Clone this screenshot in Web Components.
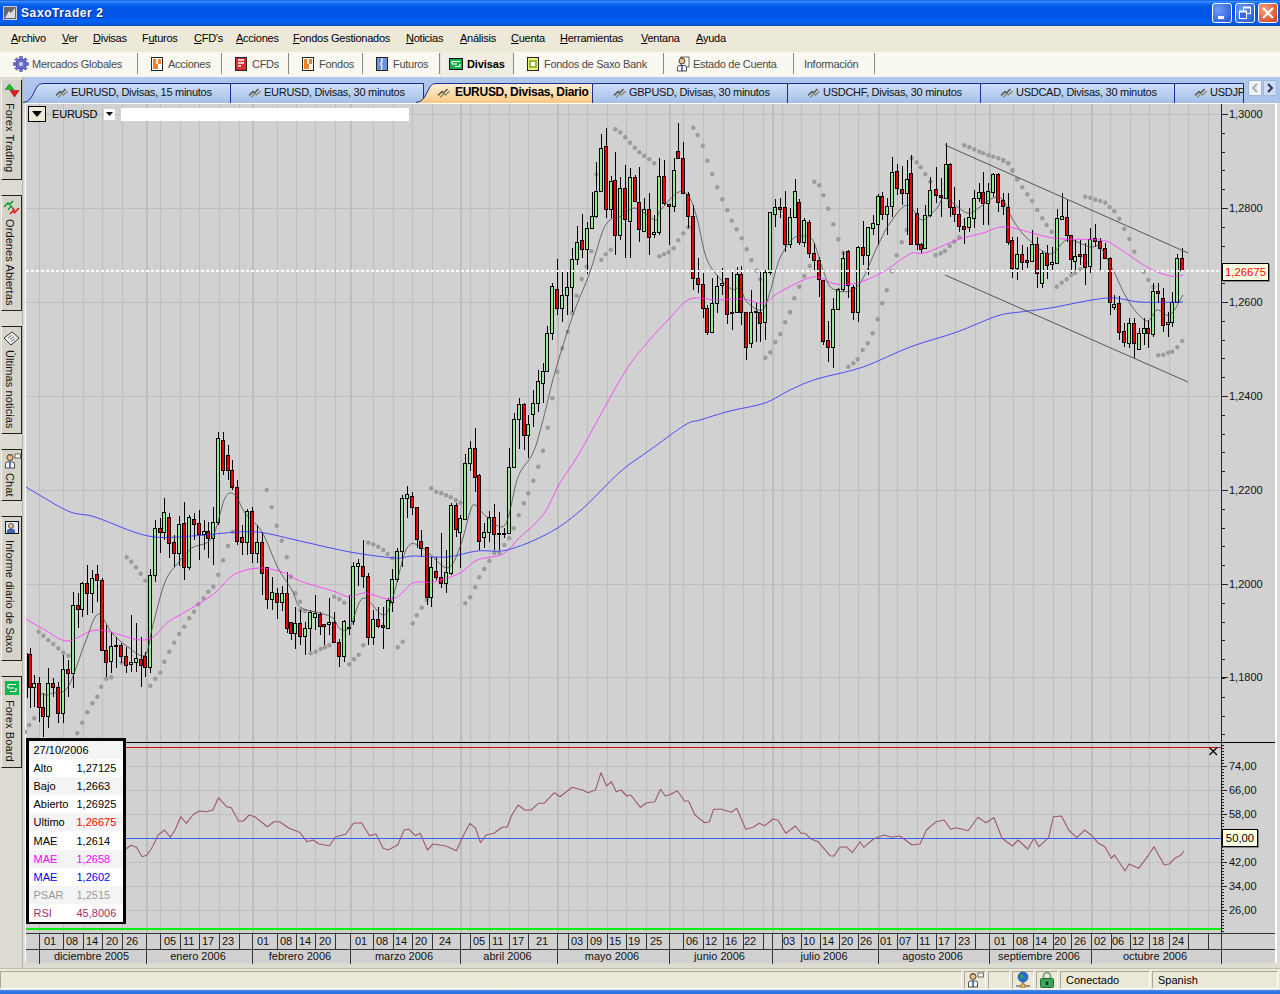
<!DOCTYPE html>
<html lang="es"><head><meta charset="utf-8"><title>SaxoTrader 2</title>
<style>
html,body{margin:0;padding:0;background:#ece9d8}
body{font:11px "Liberation Sans",Arial,sans-serif;width:1280px;height:994px;overflow:hidden}
</style></head><body>
<saxo-window>
  <saxo-titlebar>SaxoTrader 2</saxo-titlebar>
  <saxo-menubar></saxo-menubar>
  <saxo-toolbar></saxo-toolbar>
  <saxo-workspace>
    <saxo-sidebar></saxo-sidebar>
    <saxo-tabstrip></saxo-tabstrip>
    <saxo-chart></saxo-chart>
  </saxo-workspace>
  <saxo-statusbar></saxo-statusbar>
</saxo-window>
<script>
const FONT='"Liberation Sans",Arial,sans-serif';
function define(name,css,html,init){
  customElements.define(name,class extends HTMLElement{
    connectedCallback(){
      if(this.shadowRoot)return;
      const r=this.attachShadow({mode:'open'});
      r.innerHTML='<style>'+css+'</style>'+(typeof html==='function'?html(this):html);
      if(init)init(r,this);
    }
  });
}
const doc=(fill,inner)=>`<svg width="16" height="16" viewBox="0 0 16 16"><rect x="2.5" y="1.5" width="11" height="13" fill="${fill}" stroke="#222"/>${inner}</svg>`;
const person=`<svg width="18" height="16" viewBox="0 0 18 16"><circle cx="7" cy="4.5" r="3" fill="#e9bf8b" stroke="#222" stroke-width=".8"/><path d="M6 2.5h3l-.6-1.4H5z" fill="#7a5a20"/><path d="M2.5 15v-4q0-2 2-2h5q2 0 2 2v4z" fill="#fff" stroke="#222" stroke-width=".8"/><path d="M6.3 9h1.4v6H6.300z" fill="#1f3fb8"/><rect x="12" y="1" width="5.500" height="4" fill="#fff" stroke="#444" stroke-width=".8"/></svg>`;
const icons={
 gear:`<svg width="16" height="16" viewBox="0 0 16 16"><g fill="#6f74d8" stroke="#3b3f8f" stroke-width=".6"><circle cx="8" cy="8" r="5.200"/><g><rect x="6.700" y=".6" width="2.600" height="3"/><rect x="6.700" y="12.400" width="2.600" height="3"/><rect x=".6" y="6.700" width="3" height="2.600"/><rect x="12.400" y="6.700" width="3" height="2.600"/></g><g transform="rotate(45 8 8)"><rect x="6.700" y=".6" width="2.600" height="3"/><rect x="6.700" y="12.400" width="2.600" height="3"/><rect x=".6" y="6.700" width="3" height="2.600"/><rect x="12.400" y="6.700" width="3" height="2.600"/></g></g><circle cx="8" cy="8" r="2.600" fill="#c9ccf5" stroke="#3b3f8f" stroke-width=".6"/></svg>`,
 acc:doc('#fff','<path d="M4 3h3.500v5H9v5H4z" fill="#e8842a"/><path d="M9 3h3v5H9z" fill="#e8842a"/><path d="M7.500 3H9v5H7.500z" fill="#fff"/>'),
 cfd:doc('#d8302f','<path d="M5 4h6M5 7h6M5 10h3" stroke="#fff" stroke-width="1.300"/>'),
 fut:doc('#6d8fe0','<path d="M8 2v4l-1.500 2L8 10l-.6 4" stroke="#fff" stroke-width="1.200" fill="none"/>'),
 div:`<svg width="16" height="16" viewBox="0 0 16 16"><rect x="1.500" y="2.500" width="13" height="11" fill="#16b04a" stroke="#111"/><path d="M4 5.500h8M4 8h5M7 10.500h5M4 5.500V8M12 8v2.500" stroke="#fff" stroke-width="1.200" fill="none"/></svg>`,
 fsb:doc('#f4f17a','<rect x="5" y="5" width="6" height="6" fill="#fff" stroke="#7aa51e" stroke-width="1.500"/>'),
 person,
 acct:`<svg width="14" height="16" viewBox="0 0 14 16"><rect x="5" y="1" width="8" height="10" fill="#fff" stroke="#444" stroke-width=".8"/><circle cx="6" cy="5" r="3" fill="#e9bf8b" stroke="#222" stroke-width=".8"/><path d="M5 3h3l-.6-1.600H4z" fill="#7a5a20"/><path d="M1.500 15v-3.500q0-2 2-2h5q2 0 2 2V15z" fill="#fff" stroke="#222" stroke-width=".8"/><path d="M5.300 9.500h1.400V15H5.300z" fill="#1f3fb8"/></svg>`,
 fxt:`<svg width="16" height="16" viewBox="0 0 16 16"><path d="M1 6.500 5.500 1 10 6.500z" fill="#18c018" stroke="#064"  stroke-width=".5"/><path d="M6 7.500h9L10.500 14z" fill="#f01818" stroke="#600" stroke-width=".5"/></svg>`,
 ord:`<svg width="17" height="17" viewBox="0 0 17 17"><path d="M1 8 5 4l1.500 1.500L10 2" stroke="#0a9a2a" stroke-width="1.600" fill="none"/><path d="M5 11 8 7l1.500 2" stroke="#119933" stroke-width="1.400" fill="none"/><path d="M7 15l3-3 1.500 1.500L16 9" stroke="#d81818" stroke-width="1.600" fill="none"/><path d="M9.500 9l2 2.500" stroke="#d81818" stroke-width="1.400"/></svg>`,
 news:`<svg width="17" height="17" viewBox="0 0 17 17"><path d="M1 8 9 2l7 6-8 7z" fill="#eee" stroke="#222" stroke-width=".9"/><path d="M5 8l4-3M7 9.500l4-3M8 11.500l4-3" stroke="#777" stroke-width="1"/></svg>`,
 rep:`<svg width="16" height="16" viewBox="0 0 16 16"><rect x="1.500" y="1.500" width="13" height="12" fill="#dfe6f5" stroke="#111"/><circle cx="7" cy="6" r="2.500" fill="#e9bf8b" stroke="#222" stroke-width=".7"/><path d="M3 13v-2q0-2 2-2h4q2 0 2 2v2z" fill="#3a64a8"/></svg>`,
 board:`<svg width="16" height="16" viewBox="0 0 16 16"><rect x="1.500" y="1.500" width="13" height="13" fill="#18b24c" stroke="#0b5"/><path d="M4 4.500h8M4 8h6M6 11.500h6M4 4.500V8M12 8v3.500" stroke="#fff" stroke-width="1.200" fill="none"/></svg>`,
 zig:`<svg width="16" height="14" viewBox="0 0 16 14"><path d="M2 10.500 6 6.500l1.500 1.500 4-4" stroke="#55554a" stroke-width="1.500" fill="none"/><path d="M4 12.500l4-4 1.500 1.500 4-4" stroke="#8c8c70" stroke-width="1.500" fill="none"/></svg>`,
 net:`<svg width="18" height="18" viewBox="0 0 18 18"><circle cx="9" cy="6" r="5" fill="#1f6fd0" stroke="#123a80" stroke-width=".6"/><path d="M6 3l3 1 1 2-3 2zM10 8l2-2 1 1z" fill="#3aa845"/><path d="M9 11v3M2 15h14" stroke="#777" stroke-width="1.400"/><rect x="7" y="13" width="4" height="3.500" fill="#f0c040" stroke="#806010" stroke-width=".6"/></svg>`,
 lock:`<svg width="18" height="18" viewBox="0 0 18 18"><path d="M5.500 8V5a3.500 3.500 0 0 1 7 0v3" fill="none" stroke="#6d9a6d" stroke-width="1.600"/><rect x="2.500" y="7.500" width="13" height="9" rx="1" fill="#3fa35a" stroke="#1e6a35"/><rect x="7.800" y="10.500" width="2.400" height="3.500" fill="#0c3a1a"/></svg>`
};

define('saxo-window',`:host{display:flex;flex-direction:column;width:1280px;height:994px;background:#ece9d8;box-sizing:border-box}
.foot{height:4px;flex:none;background:linear-gradient(#3f86e8,#2a6fe0)}`,`<slot></slot><div class="foot"></div>`);

define('saxo-titlebar',`:host{display:flex;align-items:center;flex:none;height:26px;box-sizing:border-box;color:#fff;font:bold 12px ${FONT};letter-spacing:.6px;text-shadow:1px 1px #0a2a88;
background:linear-gradient(#0a58e4 0,#3a8efc 6%,#1670f8 12%,#0058e6 24%,#0054e3 50%,#0055eb 66%,#0262f4 82%,#0457d8 92%,#0a4fc8 100%)}
.ic{width:14px;height:14px;margin:0 4px 0 3px;background:#666;border:1px solid #ccd;display:flex;box-sizing:border-box}
.sp{flex:1}.b{width:20px;height:20px;margin-left:3px;border:1px solid #fff;border-radius:3px;box-sizing:border-box;background:radial-gradient(circle at 30% 30%,#6b9cf5,#2552d6);display:flex}
.c{background:radial-gradient(circle at 30% 30%,#f2a080,#d33c15);margin-right:2px;margin-left:3px}.b svg{margin:auto}`,
`<div class="ic"><svg width="12" height="12" viewBox="0 0 12 12"><path d="M1 11 5 4l2 2 4-5v10z" fill="#ddd"/></svg></div><slot></slot><div class="sp"></div>
<div class="b"><svg width="14" height="14"><rect x="3" y="10" width="6" height="3" fill="#fff"/></svg></div>
<div class="b"><svg width="14" height="14" fill="none" stroke="#fff"><rect x="5.500" y="1.500" width="7" height="6"/><rect x="1.500" y="5.500" width="7" height="7" fill="#3a68e0"/><path d="M5 1.500h8M1 5.500h8" stroke-width="2"/></svg></div>
<div class="b c"><svg width="14" height="14" stroke="#fff" stroke-width="2"><path d="M2 2l10 10M12 2 2 12"/></svg></div>`);

define('saxo-menubar',`:host{display:flex;flex:none;height:26px;align-items:center;background:#ece9d8;box-sizing:border-box;padding:0 0 2px 11px;color:#000;font-size:11px;letter-spacing:-.25px}
span{display:block;white-space:nowrap}u{text-underline-offset:1px}`,
()=>[['<u>A</u>rchivo',51],['<u>V</u>er',31],['<u>D</u>ivisas',49],['F<u>u</u>turos',52],['<u>C</u>FD’s',42],['<u>A</u>cciones',57],['<u>F</u>ondos Gestionados',113],['<u>N</u>oticias',54],['<u>A</u>nálisis',51],['<u>C</u>uenta',49],['<u>H</u>erramientas',81],['<u>V</u>entana',55],['<u>A</u>yuda',40]].map(([t,w])=>`<span style="width:${w}px">${t}</span>`).join(''));

define('saxo-tool',`:host{display:flex;align-items:center;flex:none;height:25px;box-sizing:border-box;padding-bottom:2px;color:#4a4a4a;white-space:nowrap;position:relative;gap:3px;letter-spacing:-.28px}
:host::after{content:"";position:absolute;right:0;top:1px;bottom:3px;width:1px;background:#8c8a80}
:host([active]){background:#f0eee2;color:#000;font-weight:bold;border-left:1px solid #e4e2d8;letter-spacing:-.1px}
svg{display:block}`,t=>`${t.dataset.icon?icons[t.dataset.icon]:''}<slot></slot>`);

define('saxo-toolbar',`:host{display:flex;flex:none;height:25px;background:#f9f8f1;border-bottom:1px solid #a8a89e;box-sizing:content-box;margin-bottom:-1px}`,
`<slot></slot>`,(r,h)=>{
 [['gear','Mercados Globales',138,13],['acc','Acciones',84,11],['cfd','CFDs',67,11],['acc','Fondos',74,11],['fut','Futuros',77,11],['div','Divisas',74,7,1],['fsb','Fondos de Saxo Bank',150,11],['acct','Estado de Cuenta',130,12],['','Información',81,10]]
 .forEach(([ic,t,w,p,a])=>{const e=document.createElement('saxo-tool');if(ic)e.dataset.icon=ic;if(a)e.setAttribute('active','');e.style.width=w+'px';e.style.paddingLeft=p+'px';e.textContent=t;h.appendChild(e);});
});

define('saxo-workspace',`:host{display:grid;flex:none;height:891px;grid-template-columns:23px 1fr;grid-template-rows:26px 1fr;background:#dedbd3}
::slotted(saxo-sidebar){grid-row:1 / 3}`,`<slot></slot>`);

define('saxo-sidetab',`:host{display:block;flex:none;box-sizing:border-box;width:21px;margin-left:1px;background:#d6d3cb;border:1px solid #222;border-left:1px solid #f4f3ee;color:#111}
.i{display:flex;justify-content:center;height:23px;padding-top:3px;box-sizing:border-box}
.t{writing-mode:vertical-rl;white-space:nowrap;font-size:11px;line-height:16px;letter-spacing:.1px}`,
t=>`<div class="i">${icons[t.dataset.icon]}</div><div class="t"><slot></slot></div>`);

define('saxo-sidebar',`:host{display:flex;flex-direction:column;gap:15px;padding-top:3px;box-sizing:border-box;border-right:1px solid #b3b1a8;background:#dedbd3;overflow:hidden}`,`<slot></slot>`,(r,h)=>{
 [['fxt','Forex Trading',100],['ord','Ordenes Abiertas',116],['news','Últimas noticias',108],['person','Chat',52],['rep','Informe diario de Saxo',145],['board','Forex Board',92]]
 .forEach(([ic,t,H],i)=>{const e=document.createElement('saxo-sidetab');e.dataset.icon=ic;e.style.height=H+'px';e.textContent=t;if(i==0)e.style.borderTop='0';h.appendChild(e);});
});

define('saxo-tab',`:host{display:flex;align-items:center;flex:none;height:20px;position:relative;box-sizing:border-box;padding-bottom:2px;white-space:nowrap;color:#111;gap:1px;font-size:11px;letter-spacing:-.27px}
:host([active]){font-weight:bold;font-size:12px;color:#000;letter-spacing:-.28px;gap:3px}
svg.bg{position:absolute;left:0;top:0;z-index:-1}svg.ic{flex:none}`,
t=>{const w=parseInt(t.style.width),a=t.hasAttribute('active');const id='g';
 return `<svg class="bg" width="${w}" height="20"><defs><linearGradient id="${id}" x1="0" y1="0" x2="0" y2="1">${a?'<stop offset="0" stop-color="#fff0d8"/><stop offset="1" stop-color="#fbc884"/>':'<stop offset="0" stop-color="#cfe0f8"/><stop offset="1" stop-color="#a3bfe9"/>'}</linearGradient></defs><path d="M0 19.500 4 18.500Q8 16.500 11 9.500L14 3.500Q16 .5 20 .5H${w-.5}V20H0z" fill="url(#${id})"/><path d="M0 19.500 4 18.500Q8 16.500 11 9.500L14 3.500Q16 .5 20 .5H${w-.5}V20" fill="none" stroke="#1a2c90"/></svg><span style="display:block">${icons.zig.replace('<svg','<svg class="ic" style="display:block"')}</span><slot></slot>`;});

define('saxo-tabstrip',`:host{display:flex;background:linear-gradient(#b1c8ed,#a9c2ea);padding-top:6px;box-sizing:border-box;height:26px;overflow:hidden;position:relative}
.clip{display:flex;width:1221px;flex:none;overflow:hidden;isolation:isolate}
.btns{display:flex;gap:1px;margin:-3px 0 0 4px;height:17px}
.btns div{width:14px;height:16px;background:#f0f3fa;border:1px solid #9fb6dd;box-sizing:border-box;display:flex}
.btns svg{margin:auto}`,
`<div class="clip"><slot></slot></div><div class="btns"><div><svg width="8" height="10" fill="none" stroke="#aaa" stroke-width="2"><path d="M6 1 2 5l4 4"/></svg></div><div style="background:#cddcf3"><svg width="8" height="10" fill="none" stroke="#335" stroke-width="2"><path d="M2 1l4 4-4 4"/></svg></div></div>`,(r,h)=>{
 [['EURUSD, Divisas, 15 minutos',208,0,31],['EURUSD, Divisas, 30 minutos',211,-18,34],['EURUSD, Divisas, Diario',177,-8,20,1],['GBPUSD, Divisas, 30 minutos',213,-18,37],['USDCHF, Divisas, 30 minutos',211,-18,36],['USDCAD, Divisas, 30 minutos',212,-18,36],['USDJPY',87,-18,36]]
 .forEach(([t,w,m,p,a],i)=>{const e=document.createElement('saxo-tab');e.style.cssText=`width:${w}px;margin-left:${m}px;padding-left:${p}px;z-index:${a?20:10-i}`;if(a)e.setAttribute('active','');e.textContent=t;h.appendChild(e);});
});

/* chart data, transcribed in crop coordinates: [ox, oy] maps crop x/3+ox, y/3+oy */
const C=[
[25,480,`14 505 685 522 622 r;28 585 680 610 622 g;41 590 725 610 682 r;55 640 770 682 708 r;70 565 745 610 707 g;85 595 650 610 622 r;100 605 730 622 700 r;115 525 730 568 700 g;130 540 650 568 580 r;143 335 625 376 580 g;158 340 445 376 388 r;172 305 410 310 388 g;187 255 405 310 340 r;202 270 400 295 340 g;217 255 365 283 300 r;230 295 512 300 510 r;244 435 590 510 545 r;259 455 578 498 542 g;274 470 565 496 498 r;289 490 550 496 528 r;304 500 580 528 556 r;319 405 575 547 553 g;332 430 575 535 547 g;347 470 622 538 556 r;361 515 592 527 562 r;376 268 578 286 562 g;391 120 305 145 286 g;406 115 220 145 157 r;418 55 180 97 157 g;433 100 235 112 190 r;448 165 260 187 220 r;463 108 258 133 220 g;478 65 300 130 262 r;493 105 270 112 262 g;508 100 180 118 133 r;521 90 240 130 163 r;536 120 210 153 163 g;550 125 235 153 175 r;565 80 255 127 175 g;580 -144 135 -126 125 g;594 -144 -15 -120 -30 r;609 -105 0 -75 -30 r;622 -60 30 -30 22 r;637 0 195 22 182 r;652 135 225 172 185 r;667 88 225 92 185 g;682 80 248 92 220 r;697 135 250 185 220 g;710 155 345 185 278 r;725 260 388 262 358 r;740 290 390 337 358 g;755 325 418 340 365 r;770 318 392 340 365 g;785 275 460 340 445 r;797 425 480 427 458 r;811 380 508 430 458 g`],
[300,380,`1 690 795 730 768 r;15 725 825 745 768 g;30 690 812 697 745 g;45 645 750 700 710 g;60 695 765 702 738 r;73 735 795 733 738 r;88 655 765 727 733 g;103 695 790 727 785 r;118 778 860 785 827 r;132 720 845 722 827 g;148 645 765 740 742 k;160 545 735 557 722 g;175 538 618 550 557 g;190 480 625 557 587 r;205 580 795 587 770 r;220 690 795 718 770 g;235 680 745 718 738 r;250 680 808 735 740 r;263 655 745 660 743 g;277 568 695 596 665 g;292 505 605 514 596 g;307 345 560 355 514 g;322 318 415 343 355 g;337 335 405 347 382 r;350 380 505 382 478 r;364 450 530 482 505 r;380 500 675 502 652 r;394 530 680 562 652 g;409 530 600 572 590 r;424 460 625 590 610 r;438 510 640 577 610 g;452 370 585 376 578 g;467 370 470 376 448 r;481 405 565 415 455 g;496 222 420 250 418 g;511 182 272 205 250 g;526 145 335 205 290 r;538 282 510 286 482 r;553 430 505 455 472 g;568 392 485 410 455 g;583 372 510 410 463 r;598 395 510 458 463 g;613 445 475 460 461 k;628 205 460 260 458 g;641 100 265 118 260 g;656 55 208 73 118 g;671 70 210 73 165 r;685 105 235 133 165 g;700 30 140 68 103 g;715 -30 95 3 68 g;729 -50 70 -27 8 g`],
[530,115,`52 632 770 655 768 g;67 505 675 514 655 g;82 432 600 522 580 r;97 470 620 541 580 g;112 470 600 517 541 g;127 400 590 433 517 g;140 332 450 382 433 g;155 297 430 376 403 r;170 322 478 340 403 g;185 230 340 304 340 g;199 140 310 228 304 g;214 57 230 100 228 g;227 38 310 92 283 r;242 183 310 197 283 g;256 112 420 196 360 r;271 185 375 220 360 g;286 150 430 220 313 r;301 160 430 187 318 g;314 180 260 187 258 r;328 155 380 260 343 r;343 250 350 283 347 g;358 235 420 283 366 r;373 300 368 352 358 g;388 130 360 184 352 g;402 135 270 184 265 r;416 268 390 268 274 r;431 130 290 166 274 g;445 25 130 109 130 r;460 80 235 128 235 r;475 232 340 236 302 r;490 270 525 302 490 r;503 430 535 490 508 r;518 475 610 508 580 r;532 570 660 580 652 r;547 490 655 565 652 g;562 480 595 512 565 g;577 460 540 503 511 g;592 488 628 490 596 r;605 470 645 592 593 k;620 455 595 478 592 g;634 452 630 478 592 r;649 590 735 592 695 r;664 525 700 590 685 g;679 565 680 588 592 r;691 470 680 592 625 r;706 465 675 470 622 g;721 290 480 292 470 g;736 252 335 277 298 g;751 250 310 277 283 r;766 228 410 277 388 r;780 280 400 307 388 g`],
[790,130,`14 148 265 184 262 g;28 208 345 217 335 r;43 265 350 270 335 g;58 270 385 275 370 r;73 340 420 370 390 r;88 380 500 390 448 r;100 450 645 450 632 r;115 573 695 631 652 r;130 505 715 538 652 g;145 475 540 478 537 g;160 365 485 384 478 g;175 360 505 362 465 r;190 465 570 470 547 r;203 348 575 350 547 g;218 273 405 350 376 r;233 290 435 292 376 g;248 255 315 280 295 g;263 193 345 199 283 g;277 185 270 199 253 r;290 205 315 229 253 g;305 82 260 127 229 g;320 103 195 124 175 r;335 107 225 176 190 r;350 90 315 148 190 g;364 75 345 129 343 r;380 235 360 248 343 r;392 340 370 343 358 r;406 225 358 256 355 g;421 140 262 180 255 g;437 110 220 178 196 r;452 145 262 196 202 r;467 40 205 103 203 g;479 100 260 103 232 r;493 172 275 232 253 r;508 210 305 253 287 r;523 265 342 287 298 r;538 235 305 262 292 g;553 180 295 203 265 g;568 160 215 187 203 g;580 125 285 187 218 r;595 160 285 183 218 g;610 128 200 133 186 g;625 130 245 133 215 r;640 190 255 211 228 r;655 190 345 230 335 r`],
[1000,130,`37 320 445 331 415 r;52 320 450 373 413 g;67 345 420 373 395 r;82 350 415 391 395 r;97 300 395 343 392 g;112 322 475 343 428 r;127 362 475 370 460 g;140 345 447 370 405 r;155 350 420 397 403 g;170 238 400 265 398 g;185 190 270 259 267 g;200 207 335 262 315 r;214 315 430 315 388 r;226 330 420 377 392 g;241 330 405 373 378 r;256 340 465 373 412 r;271 295 430 326 408 g;286 283 350 323 332 r;301 325 420 332 355 r;316 340 385 355 385 r;329 380 555 385 516 r;343 495 540 523 530 g;358 497 630 519 605 r;373 578 650 604 637 r;388 565 655 580 640 g;403 565 685 580 640 r;416 595 660 610 658 g;431 565 645 595 610 g;445 570 655 595 610 r;460 460 620 482 613 g;475 460 520 482 490 r;490 475 605 503 586 r;505 545 622 577 583 g;517 485 590 515 577 g;532 372 515 385 515 g;547 355 425 385 420 r`]
];
const D=[
[25,480,`0 755;13 735;28 715;41 455;55 467;70 481;85 492;100 505;115 518;130 527;157 760;172 728;187 697;202 670;217 650;229 620;244 596;259 592;290 548;305 232;319 245;333 262;347 281;361 302;376 617;391 596;406 578;418 545;433 515;448 488;463 462;478 440;493 415;507 395;520 373;536 355;550 335;565 320;580 284;594 241;609 198;623 155;725 30;740 82;755 137;770 182;785 232;797 290;811 340;826 390`],
[300,380,`0 665;15 693;32 820;47 815;62 807;75 802;88 796;103 650;118 658;133 668;148 853;162 838;176 824;190 796;205 488;220 493;235 500;250 510;263 522;277 535;293 802;308 785;338 730;350 706;365 683;380 660;394 325;409 335;424 340;438 346;452 352;467 360;481 368;496 670;511 652;526 622;538 592;553 567;568 542;583 518;598 518;613 495;628 475;641 445;656 406;671 370;685 340;700 302;715 260;729 212;743 143;757 55`],
[530,115,`82 770;97 700;113 650;127 595;140 542;155 492;170 455;184 409;199 178;214 435;227 418;242 404;256 43;271 52;286 67;300 83;314 98;328 112;343 122;358 133;373 145;388 424;402 418;416 412;431 400;445 376;460 355;475 337;490 38;503 60;518 92;532 137;547 178;562 217;577 253;592 286;605 317;620 343;635 370;650 403;664 436;680 467;691 493;706 728;721 712;736 682;751 657;766 622;780 592`],
[790,130,`0 547;13 505;28 470;43 438;59 408;73 155;88 166;100 196;115 236;130 283;145 328;160 368;175 710;190 700;203 688;218 660;233 640;248 610;263 568;277 520;290 481;305 424;320 376;335 337;350 300;365 85;380 97;392 112;406 133;421 155;437 376;452 370;465 363;479 348;493 335;508 322;523 46;538 52;553 58;568 65;580 70;595 76;610 80;625 85;640 90;655 100;668 120;682 148`],
[1000,130,`10 92;25 100;37 122;52 148;67 172;82 193;97 213;112 240;127 265;140 285;155 305;170 470;185 458;200 448;214 435;226 428;241 418;256 200;271 203;286 209;301 213;316 218;329 231;343 244;358 266;373 297;388 327;403 365;431 425;445 450;460 472;475 676;490 674;505 668;517 665;532 652;547 633`]
];
const BLUE='26,487 68,511 95,517 148,536 192,536 225,533 258,532 300,541 350,552 395,558 413,556 447,557 477,551 507,550 547,534 580,511 620,472 650,450 685,425 700,420 730,411 765,403 790,390 817,379 863,367 910,347 957,332 997,316 1020,312 1050,308 1107,298 1140,302 1183,302';
const MAG='26,619 45,630 68,641 98,630 145,640 168,622 185,612 215,593 233,575 258,568 282,572 300,581 333,591 350,597 365,593 393,599 413,583 433,582 460,573 477,560 503,554 520,537 543,515 560,483 580,452 623,375 647,343 670,318 690,299 717,300 743,299 763,303 780,292 813,277 835,284 857,283 883,272 910,254 925,253 957,240 983,233 1007,227 1053,238 1100,240 1117,247 1147,267 1170,276 1183,275';
const GRY='37,690 45,695 53,693 68,687 85,643 98,614 112,633 128,647 145,655 153,625 165,582 178,563 192,548 212,538 225,498 235,495 245,513 262,532 278,568 292,590 300,607 320,613 333,618 340,629 350,627 363,598 383,615 393,597 407,548 423,548 447,568 460,547 470,512 475,505 487,517 505,525 518,477 533,453 543,420 555,372 573,315 590,272 602,233 610,220 620,217 635,208 655,220 660,211 677,193 688,195 697,218 708,262 730,288 740,288 747,302 762,310 770,292 780,258 795,237 810,238 815,245 823,270 833,289 857,287 878,245 890,223 907,205 922,220 937,208 945,198 967,213 980,207 993,198 1003,200 1013,220 1027,238 1050,254 1067,240 1090,247 1100,247 1113,270 1125,295 1137,313 1148,321 1157,310 1170,315 1183,295';
const RSI='130,330 138,316 145,322 152,350 158,345 165,320 172,285 180,270 187,292 193,270 200,230 207,250 215,225 223,213 232,215 240,210 247,173 257,200 263,203 272,243 278,243 285,225 292,230 300,245 308,260 316,245 323,245 335,265 348,277 357,305 365,300 372,312 385,317 393,290 405,283 415,250 425,248 435,287 443,282 452,325 458,330 470,315 478,270 484,268 492,287 498,280 507,330 514,312 530,318 543,332 552,285 560,250 567,265 573,308 580,285 590,280 600,262 606,262 612,225 620,195 628,210 636,210 645,190 652,190 665,158 672,170 687,142 700,150 707,158 716,150 723,98 730,138 736,125 742,155 748,150 755,168 760,165 772,202 780,188 790,185 797,148 803,168 810,163 818,152 827,183 832,183 840,225 852,248 858,245 863,208 873,208 885,217 892,205 903,268 912,262 920,250 927,257 937,237 943,240 953,280 965,258 972,280 977,280 985,298 993,305 1008,347 1013,348 1020,322 1028,320 1036,338 1045,305 1050,322 1062,297 1075,285 1085,292 1095,288 1110,315 1120,312 1128,270 1140,245 1150,240 1158,268 1165,263 1180,272 1192,232 1202,248 1212,233 1222,295 1235,318 1242,300 1254,327 1262,295 1268,320 1280,293 1286,230 1296,228 1305,270 1315,293 1325,270 1335,290 1342,310 1350,320 1358,355 1362,345 1375,393 1380,372 1392,385 1403,350 1411,320 1424,375 1430,372 1437,355 1445,345 1448,333'
 .split(' ').map(p=>{const [a,b]=p.split(',');return (20+a*.8036).toFixed(1)+','+(740+b/3).toFixed(1)}).join(' ');
const VGRID=[39,63,83,102,122,160,180,199,219,239,277,296,315,335,373,393,412,432,470,489,509,528,568,587,607,626,646,683,703,723,743,763,782,801,820,839,858,897,917,936,955,975,1013,1033,1053,1071,1110,1130,1149,1169,1188,1208];
const VTHICK=[146,252,350,460,557,669,772,878,989,1091];
function smooth(str){
 const p=str.split(' ').map(s=>s.split(',').map(Number));
 let d=`M${p[0][0]} ${p[0][1]}`;
 for(let i=0;i<p.length-1;i++){
  const a=p[Math.max(0,i-1)],b=p[i],c=p[i+1],e=p[Math.min(p.length-1,i+2)];
  const k=6;
  d+=`C${(b[0]+(c[0]-a[0])/k).toFixed(1)} ${(b[1]+(c[1]-a[1])/k).toFixed(1)} ${(c[0]-(e[0]-b[0])/k).toFixed(1)} ${(c[1]-(e[1]-b[1])/k).toFixed(1)} ${c[0]} ${c[1]}`;
 }
 return d;
}
function chartSvg(){
 let s='';
 const ln=(x1,y1,x2,y2,c,w=1,extra='')=>`<line x1="${x1}" y1="${y1}" x2="${x2}" y2="${y2}" stroke="${c}" stroke-width="${w}" ${extra}/>`;
 let g='';
 VGRID.forEach(x=>g+=ln(x+.5,104,x+.5,933,'#bfbfbf'));
 VTHICK.forEach(x=>g+=ln(x+.5,104,x+.5,933,'#bdbdbd',2));
 [114,208,302,396,490,584,677].forEach(y=>g+=ln(26,y+.5,1221,y+.5,'#bfbfbf',1.500));
 [766,790,814,862,886,910].forEach(y=>g+=ln(26,y+.5,1221,y+.5,'#bfbfbf',1.500));
 s+=`<g shape-rendering="crispEdges">${g}</g>`;
 D.forEach(([ox,oy,d])=>d.split(';').forEach(p=>{const [a,b]=p.split(' ').map(Number);s+=`<circle cx="${(ox+a/3).toFixed(1)}" cy="${(oy+b/3).toFixed(1)}" r="2.200" fill="#9b9b9b"/>`;}));
 let w='',b='';
 w+=ln(27.500,653,27.500,698,'#000');
 C.forEach(([ox,oy,d])=>d.split(';').forEach(p=>{const f=p.split(' ');const x=Math.round(ox+f[0]/3);const Y=i=>Math.round(oy+f[i]/3);
   w+=ln(x+.5,Y(1),x+.5,Y(2),'#000');
   const t=Y(3),bb=Math.max(Y(4),t+1);const col={g:'#8fee8f',r:'#f00000',k:'#000'}[f[5]];
   b+=`<rect x="${x-1.5}" y="${t+.5}" width="3" height="${bb-t}" fill="${col}" stroke="#000"/>`;
 }));
 s+=`<g shape-rendering="crispEdges">${w}${b}</g>`;
 const sp=(p,c,o=1,wd=1)=>`<path d="${smooth(p)}" fill="none" stroke="${c}" stroke-width="${wd}" opacity="${o}"/>`;
 const pl=(p,c,o=1,wd=1)=>`<polyline points="${p}" fill="none" stroke="${c}" stroke-width="${wd}" opacity="${o}" stroke-linejoin="round"/>`;
 s+=sp(GRY,'#444',.75)+sp(MAG,'#ff30ff',.8)+sp(BLUE,'#2a2aff',.8);
 s+=ln(945,145,1188,253,'#555')+ln(945,275,1188,382,'#555');
 s+=ln(26,271,1221,271,'#fff',2,'stroke-dasharray="3 2"');
 s+=ln(26,742.5,1275,742.5,'#000',1,'shape-rendering="crispEdges"');
 s+=ln(26,747.5,1221,747.5,'#cc1010',1,'shape-rendering="crispEdges"');
 s+=ln(26,838.5,1221,838.5,'#2f62ff',1,'shape-rendering="crispEdges"');
 s+=pl(RSI,'#9c5876',1,1.1);
 s+=ln(26,929,1221,929,'#10f010',2,'shape-rendering="crispEdges"');
 let ax=ln(1221.5,104,1221.5,933,'#222');
 for(let y=114;y<740;y+=18.8){ax+=ln(1222,Math.round(y)+.5,1225,Math.round(y)+.5,'#222');}
 [114,208,302,396,490,584,677].forEach(y=>ax+=ln(1222,y+.5,1228,y+.5,'#222'));
 for(let y=745;y<932;y+=3){ax+=ln(1222,y+.5,1224,y+.5,'#222');}
 [766,790,814,838,862,886,910].forEach(y=>ax+=ln(1222,y+.5,1227,y+.5,'#222'));
 s+=`<g shape-rendering="crispEdges">${ax}</g>`;
 const tx=(y,t)=>`<text x="1229" y="${y+4}" font-size="11" fill="#111" font-family='"Liberation Sans",Arial,sans-serif'>${t}</text>`;
 [[114,'1,3000'],[208,'1,2800'],[302,'1,2600'],[396,'1,2400'],[490,'1,2200'],[584,'1,2000'],[677,'1,1800'],[766,'74,00'],[790,'66,00'],[814,'58,00'],[862,'42,00'],[886,'34,00'],[910,'26,00']].forEach(([y,t])=>s+=tx(y,t));
 s+=`<path d="M1209.500 747.500 1217 755M1217 747.500 1209.500 755" stroke="#000" stroke-width="1.200"/>`;
 return s;
}

define('saxo-legend',`:host{position:absolute;left:1px;top:635px;width:100px;height:186px;box-sizing:border-box;border:3px solid #000;border-bottom-width:2px;background:#fff;display:grid;grid-template-rows:repeat(10,18.1px);font-size:11px;color:#000;z-index:3}
div{display:flex;align-items:center;padding-left:4.500px;white-space:nowrap}
div:nth-child(even){background:#f4f4f4}
b{font-weight:normal;width:43px;flex:none}`,
()=>{const rows=[['Alto','1,27125'],['Bajo','1,2663'],['Abierto','1,26925'],['Ultimo','1,26675','#f00',1],['MAE','1,2614'],['MAE','1,2658','#f0f'],['MAE','1,2602','#00f'],['PSAR','1,2515','#999'],['RSI','45,8006','#a03068']];
 return '<div>27/10/2006</div>'+rows.map(([a,b,c,only])=>`<div style="${c&&!only?'color:'+c:''}"><b>${a}</b><span style="${c?'color:'+c:''}">${b}</span></div>`).join('');});

define('saxo-dateaxis',`:host{display:block;height:30px;box-sizing:border-box;border-top:1px solid #333;margin-left:1px;margin-right:2px;font-size:11px;color:#111;background:#d1d1d1}
.r{display:flex;height:15px;box-sizing:border-box}.r+.r{border-top:1px solid #333;height:15px}
.c{box-sizing:border-box;border-left:1px solid #333;white-space:nowrap;line-height:14px;flex:none}
.m{text-align:center;line-height:13px;padding-right:3px}`,
()=>{
 const days=[[26],[39,'01',50],[63,'08',72],[83,'14',92],[102,'20',112],[122,'26',132],[146],[160,'05',170],[180,'11',189],[199,'17',208],[219,'23',228],[239],[252,'01',263],[277,'08',286],[296,'14',305],[315,'20',325],[335],[350,'01',361],[373,'08',382],[393,'14',401],[412,'20',421],[432,'24',445],[460],[470,'05',479],[489,'11',498],[509,'17',518],[528,'21',542],[557],[568,'03',577],[587,'09',596],[607,'15',615],[626,'19',634],[646,'25',656],[669],[683,'06',692],[703,'12',711],[723,'16',731],[743,'22',750],[763],[772],[782,'03',788],[801,'10',809],[820,'14',828],[839,'20',847],[858,'26',866],[878,'01',886],[897,'07',905],[917,'11',925],[936,'17',944],[955,'23',964],[975],[989,'01',1000],[1013,'08',1022],[1033,'14',1041],[1053,'20',1060],[1071,'26',1080],[1091,'02',1100],[1111,'06',1118],[1130,'12',1138],[1149,'18',1158],[1169,'24',1178],[1188],[1208],[1221]];
 let a='';
 days.forEach((d,i)=>{const nx=i<days.length-1?days[i+1][0]:1275;const pad=d[1]?Math.max(0,d[2]-6-d[0]-1):0;
  a+=`<div class="c" style="width:${nx-d[0]}px;padding-left:${pad}px;${i==0?'border-left:0':''}">${d[1]||''}</div>`;});
 const mons=[[26,''],[39,'diciembre 2005'],[146,'enero 2006'],[252,'febrero 2006'],[350,'marzo 2006'],[460,'abril 2006'],[557,'mayo 2006'],[669,'junio 2006'],[772,'julio 2006'],[878,'agosto 2006'],[989,'septiembre 2006'],[1091,'octubre 2006'],[1221,'']];
 let b='';
 mons.forEach((m,i)=>{const nx=i<mons.length-1?mons[i+1][0]:1275;b+=`<div class="c m" style="width:${nx-m[0]}px;${i==0?'border-left:0':''}">${m[1]}</div>`;});
 return `<div class="r">${a}</div><div class="r">${b}</div>`;});

define('saxo-pricetag',`:host{position:absolute;box-sizing:border-box;height:18px;background:#ffffe1;border:1px solid #000;font-size:11.300px;line-height:16px;text-align:center;z-index:2;box-shadow:1px 1px 0 #888}`,`<slot></slot>`);

define('saxo-symbolbar',`:host{position:absolute;left:3px;top:3px;display:flex;align-items:center;height:16px;z-index:2;color:#000;font-size:11px;letter-spacing:-.2px}
.b{width:18px;height:16px;border:1px solid #000;background:#ece9d8;box-sizing:border-box;display:flex;margin-right:6px}
.b svg,.s svg{margin:auto}.s{width:11px;height:11px;background:#fff;display:flex;margin:0 6px 0 7px}
.f{width:288px;height:13px;background:#fff}`,
`<div class="b"><svg width="10" height="6"><path d="M0 0h10L5 6z"/></svg></div><span>EURUSD</span><div class="s"><svg width="7" height="4"><path d="M0 0h7L3.500 4z"/></svg></div><div class="f"></div>`);

define('saxo-chart',`:host{display:block;position:relative;margin-left:2px;width:1252px;height:860px;background:#fff;box-sizing:border-box}
.plot{display:block;position:absolute;left:0;top:0}.bg{height:829px;background:#d1d1d1;margin:1px 2px 0 1px;box-sizing:border-box}`,
()=>`<div class="bg"></div><svg class="plot" width="1252" height="830" viewBox="25 103 1252 830">${chartSvg()}</svg>
<saxo-symbolbar></saxo-symbolbar><saxo-legend></saxo-legend>
<saxo-pricetag style="left:1197px;top:160px;width:47px;color:#f00">1,26675</saxo-pricetag>
<saxo-pricetag style="left:1197px;top:726px;width:36px;color:#000">50,00</saxo-pricetag>
<saxo-dateaxis></saxo-dateaxis>`);

define('saxo-statusbar',`:host{display:flex;gap:2px;flex:none;height:22px;box-sizing:border-box;padding:2px 2px 1px 0;background:#ece9d8;font-size:11px;color:#000;border-top:1px solid #c0bdb0}
div{box-sizing:border-box;border:1px solid;border-color:#aca899 #fff #fff #aca899;display:flex;align-items:center;justify-content:center;flex:none}
.t{justify-content:flex-start;padding-left:5px}`,
()=>`<div style="width:962px"></div><div style="width:22px">${icons.person}</div><div style="width:22px"></div><div style="width:22px">${icons.net}</div><div style="width:22px">${icons.lock}</div><div class="t" style="width:90px">Conectado</div><div class="t" style="width:126px">Spanish</div>`);
</script>
</body></html>
